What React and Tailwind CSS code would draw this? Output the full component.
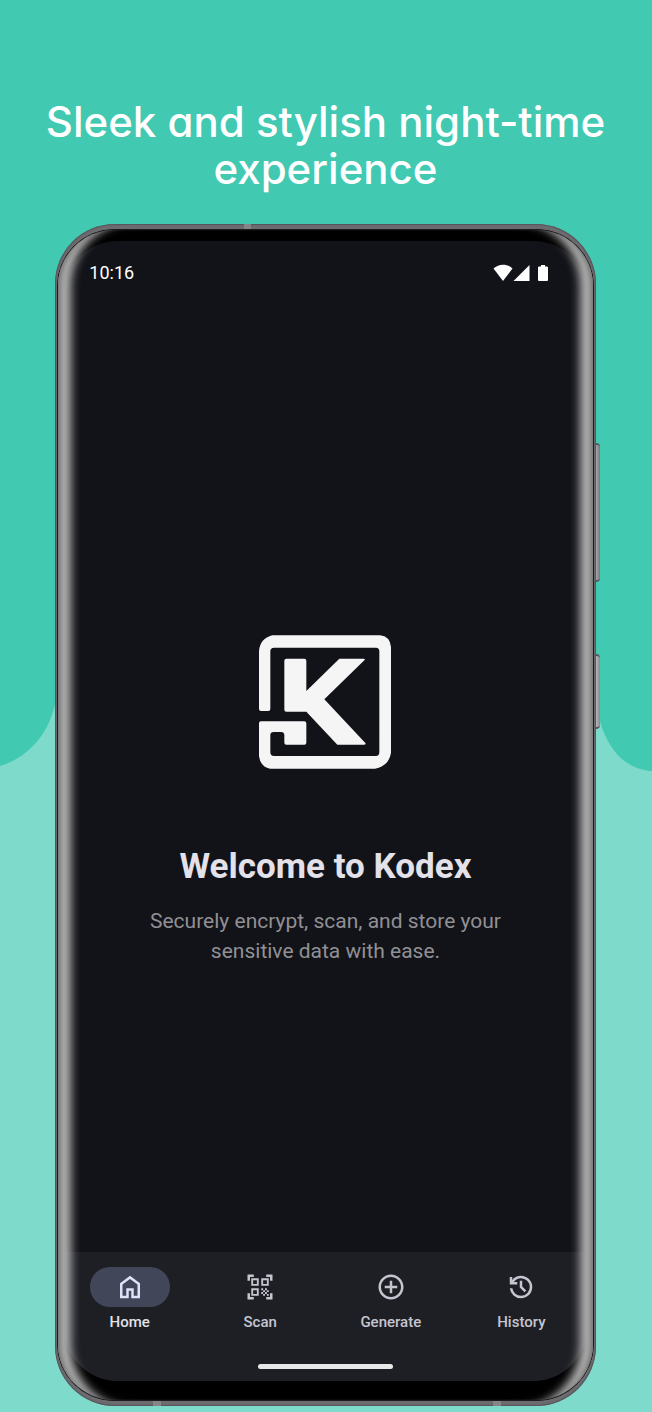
import React from "react";
import { MdQrCodeScanner, MdControlPoint } from "react-icons/md";

function HomeIcon() {
  return (
    <svg viewBox="0 -960 960 960" className="size-[30px]" fill="currentColor" aria-hidden="true">
      <path d="M240-200h120v-240h240v240h120v-360L480-740 240-560v360Zm-80 80v-480l320-240 320 240v480H520v-240h-80v240H160Z" />
    </svg>
  );
}

function HistoryIcon() {
  return (
    <svg viewBox="0 -960 960 960" className="size-[30px]" fill="currentColor" aria-hidden="true">
      <path d="M480-120q-138 0-240.5-91.5T122-440h82q14 104 92.5 172T480-200q117 0 198.5-81.5T760-480q0-117-81.5-198.5T480-760q-69 0-129 32t-101 88h110v80H120v-240h80v94q51-64 124.5-99T480-840q75 0 140.5 28.5t114 77q48.5 48.5 77 114T840-480q0 75-28.5 140.5t-77 114q-48.5 48.5-114 77T480-120Zm112-192L440-464v-216h80v184l128 128-56 56Z" />
    </svg>
  );
}

function Logo() {
  return (
    <svg viewBox="57 45 396 400" className="h-[134px] w-[132px]" fill="#f5f5f5" role="img" aria-label="Kodex">
      <path d="M63 272Q57 272 57 266V92Q60 55 97 45H420Q450 48 453 80V397Q446 438 405 445H90Q62 440 57 408V309Q57 303 63 303H193Q199 303 199 309V367Q199 373 193 373H139Q133 373 133 367V345Q133 335 123 335H101Q91 335 91 345V396Q91 407 102 407H408Q418 407 418 396V93Q418 82 408 82H102Q91 82 91 93V266Q91 272 85 272Z" />
      <path d="M139 115H193Q199 115 199 121V212L298 115H371Q377 116 373 120L253 237L376 368Q379 373 372 373H292L199 274H139Q133 274 133 268V121Q133 115 139 115Z" />
    </svg>
  );
}

function StatusBar() {
  return (
    <div className="flex h-16 items-center justify-between pr-[38px] pl-[25px] text-white">
      <span className="text-lg">10:16</span>
      <svg viewBox="0 0 56 18" className="h-[18px] w-14" fill="currentColor" aria-hidden="true">
        <path d="M0.500 4.500C5.500-0.600 14.500-0.600 19.500 4.500L10 17Z" />
        <path d="M36.500 1V17H20.500Z" />
        <path d="M48 1h4v1.500h2a1 1 0 0 1 1 1V16a1 1 0 0 1-1 1h-8a1 1 0 0 1-1-1V3.500a1 1 0 0 1 1-1h2Z" />
      </svg>
    </div>
  );
}

const items = [
  { label: "Home", icon: <HomeIcon />, active: true },
  { label: "Scan", icon: <MdQrCodeScanner size={30} /> },
  { label: "Generate", icon: <MdControlPoint size={30} /> },
  { label: "History", icon: <HistoryIcon /> },
];

function BottomNav() {
  return (
    <div className="flex flex-col items-center bg-[#1e1f25] pt-[15px] pb-3">
      <nav className="grid w-full grid-cols-4">
        {items.map(({ label, icon, active }) => (
          <button
            key={label}
            type="button"
            aria-current={active ? "page" : undefined}
            className={`flex flex-col items-center gap-[5px] font-medium ${active ? "text-[#e3e1e9]" : "text-[#c5c5d0]"}`}
          >
            <span
              className={`flex h-10 w-20 items-center justify-center rounded-full ${active ? "bg-[#424659] text-[#dde1f9]" : ""}`}
            >
              {icon}
            </span>
            <span className="text-[15px] leading-5">{label}</span>
          </button>
        ))}
      </nav>
      <div className="mt-8 h-[5px] w-[135px] rounded-full bg-[#e8e8e8]" />
    </div>
  );
}

function Backdrop() {
  return (
    <svg
      viewBox="0 0 652 1412"
      preserveAspectRatio="none"
      className="absolute inset-0 size-full"
      aria-hidden="true"
    >
      <rect width="652" height="1412" fill="#7edacb" />
      <path d="M0 0H652V771C620 769 602 742 595 700H56C50 732 30 757 0 766Z" fill="#41c9b2" />
    </svg>
  );
}

function Phone() {
  return (
    <div className="relative mx-auto flex w-[83%] flex-1 flex-col rounded-[60px] bg-[#6c6b6f] px-[2px] pt-[5px] pb-[5px] shadow-[inset_0_0_1px_1px_#55555a]">
      <span className="absolute top-0 left-[35%] h-[5px] w-[7px] bg-[#858589]" />
      <span className="absolute bottom-0 left-[18%] h-[5px] w-[8px] bg-[#858589]" />
      <span className="absolute bottom-0 left-[81%] h-[5px] w-[8px] bg-[#858589]" />
      <span className="absolute top-[18.5%] -right-1 h-[139px] w-1 rounded-r-sm border-y-2 border-[#55545a] bg-linear-to-r from-[#a9a6ac] to-[#77757a]" />
      <span className="absolute top-[36.4%] -right-1 h-[75px] w-1 rounded-r-sm border-y-2 border-[#55545a] bg-linear-to-r from-[#b9b6bc] to-[#8a878d]" />
      <div className="relative flex flex-1 flex-col rounded-[57px] border border-[#1c1c1e] bg-black px-[6px] pt-[11px] pb-[19px]">
        <div className="flex flex-1 flex-col overflow-hidden rounded-[54px] bg-[#121318]">
          <StatusBar />
          <main className="flex flex-1 flex-col items-center justify-center px-16 pt-11 text-center">
            <Logo />
            <h2 className="mt-[76px] text-[35px] leading-[44px] font-bold text-[#e3e1e9]">Welcome to Kodex</h2>
            <p className="mt-[17px] max-w-[380px] text-[21px] leading-[30px] text-[#919094]">
              Securely encrypt, scan, and store your sensitive data with ease.
            </p>
          </main>
          <BottomNav />
        </div>
        <div className="pointer-events-none absolute inset-0 rounded-[56px] shadow-[inset_7px_0_5px_-4px_#747474,inset_-7px_0_5px_-4px_#747474,inset_22px_0_10px_-9px_#b4b4b4,inset_-22px_0_10px_-9px_#b4b4b4]" />
      </div>
    </div>
  );
}

export default function App() {
  return (
    <div className="relative flex min-h-screen flex-col font-['Roboto',sans-serif]">
      <Backdrop />
      <div className="relative flex flex-1 flex-col pr-px pb-[6px]">
        <h1 className="px-8 pt-[98px] pb-8 text-center font-['Inter',sans-serif] text-[42px] leading-[47px] font-medium text-white [font-feature-settings:'cv11']">
          Sleek and stylish night-time experience
        </h1>
        <Phone />
      </div>
    </div>
  );
}
